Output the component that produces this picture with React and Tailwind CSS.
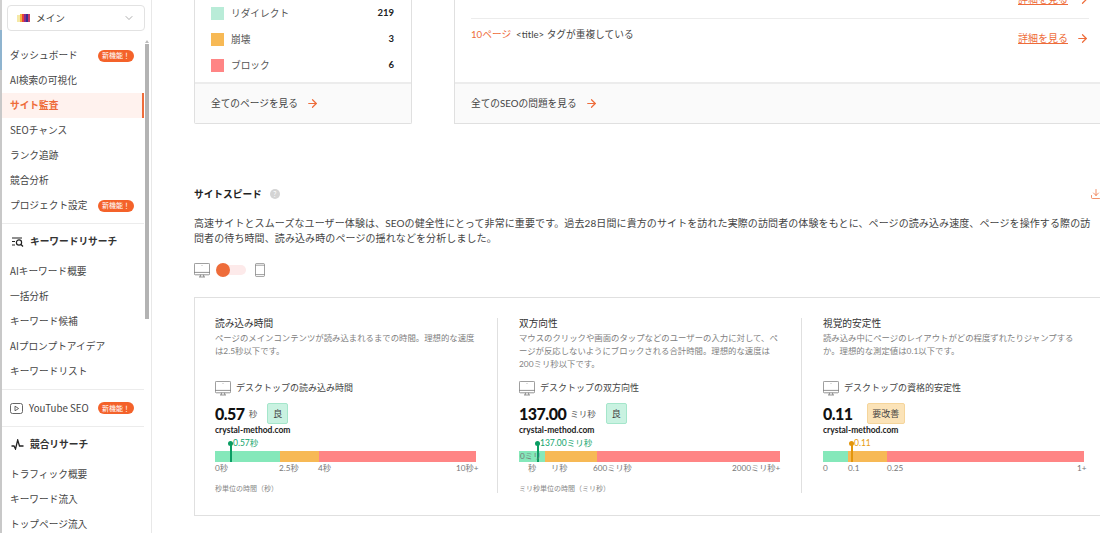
import React from "react";
import { ArrowRight, ChevronDown, Download } from "lucide-react";

const Badge = () => (
  <span className="ml-auto mr-[10px] flex h-[12px] w-[36px] items-center justify-center rounded-full bg-[#f4622a] text-[7px] leading-none text-white">新機能！</span>
);

const Row = ({ label, badge, active }) => (
  <div className={`flex h-[25px] items-center pl-[8px] text-[9.7px] ${active ? "border-r-2 border-[#ee6c3a] bg-[#fff2ee] font-bold text-[#ee6c3a]" : "text-[#444]"}`}>
    <span>{label}</span>
    {badge && <Badge />}
  </div>
);

const Divider = ({ className = "" }) => <div className={`h-px bg-[#ececec] ${className}`} />;

const SearchIcon = () => (
  <svg width="13" height="12" viewBox="0 0 13 12" fill="none" stroke="#222" strokeWidth="1.2">
    <path d="M1 2h10M1 5.5h3M1 9h3" />
    <circle cx="8" cy="6.5" r="2.6" />
    <path d="M10 8.5l2 2" />
  </svg>
);
const PlayIcon = () => (
  <svg width="13" height="11" viewBox="0 0 13 11" fill="none" stroke="#555" strokeWidth="0.9">
    <rect x="0.5" y="0.5" width="12" height="10" rx="2" />
    <path d="M5 3.2v4.6l3.6-2.3z" />
  </svg>
);
const PulseIcon = () => (
  <svg width="13" height="11" viewBox="0 0 13 11" fill="none" stroke="#222" strokeWidth="1.3">
    <path d="M0.5 7h2.5l1.5 3 2.2-9 1.8 6h4" />
  </svg>
);
const Monitor = () => (
  <svg className="shrink-0" width="16" height="15" viewBox="0 0 16 15" fill="none" stroke="#666" strokeWidth="0.7">
    <rect x="0.4" y="0.4" width="15.2" height="11.4" rx="1" />
    <path d="M0.4 9.4h15.2M5 14h6M6.5 11.8l-.4 2.2M9.5 11.8l.4 2.2M8 2.4v.6" />
  </svg>
);
const Phone = () => (
  <svg width="10" height="14" viewBox="0 0 10 14" fill="none" stroke="#777" strokeWidth="0.7">
    <rect x="0.5" y="0.4" width="9" height="13.2" rx="1.2" />
    <path d="M0.5 2.2h9M0.5 11.6h9" />
  </svg>
);
const Logo = () => (
  <svg width="13" height="9" viewBox="0 0 13 9">
    <rect x="0" y="1" width="3" height="7" fill="#f5e9a8" />
    <rect x="3" y="0" width="2" height="8" fill="#f5b23c" />
    <rect x="5" y="0" width="2" height="8" fill="#e8413c" />
    <rect x="7" y="0" width="2" height="8" fill="#8a2b8f" />
    <rect x="9" y="0" width="2" height="8" fill="#3a2f8f" />
    <rect x="11" y="0" width="2" height="8" fill="#c23a6a" />
  </svg>
);

const Legend = ({ color, label, value }) => (
  <div className="flex h-[26px] items-center">
    <span className={`h-[13px] w-[13px] ${color}`} />
    <span className="ml-[7px] text-[9.7px] text-[#555]">{label}</span>
    <span className="ml-auto text-[9.5px] font-bold text-[#222]">{value}</span>
  </div>
);

const Footer = ({ label }) => (
  <div className="flex h-[41px] shrink-0 items-center border-t-2 border-[#ececec] bg-[#fafafa] text-[9.7px] text-[#444]">
    {label}
    <ArrowRight className="ml-[8px] text-[#ee6c3a]" size={13} strokeWidth={2.2} />
  </div>
);

const Issue = ({ text }) => (
  <div className="flex h-[38px] items-center justify-between">
    <div className="-mt-[7px] text-[9.7px] text-[#444]">{text}</div>
    <div className="flex items-center text-[10px] text-[#ee6c3a]">
      <span className="underline">詳細を見る</span>
      <ArrowRight className="ml-[8px]" size={13} strokeWidth={2.2} />
    </div>
  </div>
);

const Metric = ({ title, desc, head, value, unit, badge, badgeClass, marker, markerClass, dotClass, green, orange, ticks, note }) => (
  <div className="w-[261px]">
    <div className="h-[10px] text-[9.7px] leading-[10px] text-[#333]">{title}</div>
    <div className="mt-[4px] h-[48px] text-[8.4px] leading-[13px] text-[#808080]">
      {desc.map((d) => <div key={d} className="whitespace-nowrap">{d}</div>)}
    </div>
    <div className="flex h-[16px] items-center text-[9px] text-[#444]">
      <Monitor />
      <span className="ml-[5px]">{head}</span>
    </div>
    <div className="mt-[7px] flex h-[21px] items-center">
      <span className="text-[16px] font-black leading-none tracking-[-0.5px] text-[#111]">{value}</span>
      {unit && <span className="ml-[4px] mt-[2px] text-[8.5px] text-[#555]">{unit}</span>}
      <span className={`flex h-[21px] items-center justify-center rounded-[2px] border text-[9px] text-[#444] ${unit ? "ml-[10px]" : "ml-[14px]"} ${badgeClass}`}>{badge}</span>
    </div>
    <div className="mt-[1px] h-[10px] text-[8.5px] font-bold leading-[10px] text-[#222]">crystal-method.com</div>
    <div className="relative pt-[16px]">
      <div className="flex h-[11px] w-[261px]">
        <div className="bg-[#85e8ba]" style={{ width: green }} />
        <div className="bg-[#f7b955]" style={{ width: orange }} />
        <div className="flex-1 bg-[#ff8585]" />
      </div>
      <div className={`absolute top-[8px] h-[19px] w-[1.5px] ${dotClass}`} style={{ left: marker.x }} />
      <div className={`absolute top-[6px] h-[5px] w-[5px] rounded-full ${dotClass}`} style={{ left: marker.x - 2 }} />
      <div className={`absolute top-[3px] text-[8.5px] leading-[10px] ${markerClass}`} style={{ left: marker.x + 3 }}>{marker.label}</div>
      <div className="relative h-[12px] text-[8.2px] leading-[13px] text-[#777]">
        {ticks.map((t) => (
          <span key={t.label} className="absolute whitespace-nowrap" style={{ left: t.x, top: t.y || 0 }}>{t.label}</span>
        ))}
      </div>
    </div>
    <div className="mt-[9px] h-[10px] text-[7px] leading-[10px] text-[#888]">{note}</div>
  </div>
);

export default function App() {
  return (
    <div className="flex h-[533px] w-[1100px] overflow-hidden bg-white font-['Noto_Sans_CJK_JP',sans-serif]">
      <aside className="flex w-[152px] shrink-0 border-r border-[#e8e8e8]">
        <div className="w-[2px] shrink-0 bg-[linear-gradient(to_bottom,#d0d0d0_0,#d0d0d0_30px,#8fb4cf_30px,#8fb4cf_70px,#c8c8c8_70px)]" />
        <div className="w-[142px] shrink-0">
          <div className="mb-[12px] ml-[5px] mt-[5px] flex h-[26px] w-[138px] items-center rounded-[4px] border border-[#e2e2e2] pl-[9px] pr-[9px] text-[9.7px] text-[#444]">
            <Logo />
            <span className="ml-[6px]">メイン</span>
            <ChevronDown className="ml-auto text-[#777]" size={12} strokeWidth={1.2} />
          </div>
          <Row label="ダッシュボード" badge />
          <Row label="AI検索の可視化" />
          <Row label="サイト監査" active />
          <Row label="SEOチャンス" />
          <Row label="ランク追跡" />
          <Row label="競合分析" />
          <Row label="プロジェクト設定" badge />
          <Divider className="mt-[5px]" />
          <div className="flex h-[35px] items-center pl-[9px] text-[9.7px] font-bold text-[#333]">
            <SearchIcon />
            <span className="ml-[6px]">キーワードリサーチ</span>
          </div>
          <Row label="AIキーワード概要" />
          <Row label="一括分析" />
          <Row label="キーワード候補" />
          <Row label="AIプロンプトアイデア" />
          <Row label="キーワードリスト" />
          <Divider className="mt-[5px]" />
          <div className="flex h-[36px] items-center pl-[8px] text-[9.7px] text-[#444]">
            <PlayIcon />
            <span className="ml-[6px]">YouTube SEO</span>
            <Badge />
          </div>
          <Divider />
          <div className="flex h-[35px] items-center pl-[9px] text-[9.7px] font-bold text-[#333]">
            <PulseIcon />
            <span className="ml-[6px]">競合リサーチ</span>
          </div>
          <Row label="トラフィック概要" />
          <Row label="キーワード流入" />
          <Row label="トップページ流入" />
        </div>
        <div className="ml-[1px] w-[4px] shrink-0 pt-[40px]">
          <div className="mx-auto mb-[1px] h-0 w-0 border-x-[2px] border-b-[3px] border-x-transparent border-b-[#bbb]" />
          <div className="h-[275px] w-[4px] bg-[#b3b3b3]" />
        </div>
      </aside>

      <main className="min-w-0 flex-1 pl-[42px] font-['Lato','Noto_Sans_CJK_JP',sans-serif]">
        <div className="-mt-[20px] flex">
          <section className="flex h-[144px] w-[218px] shrink-0 flex-col rounded-b-[2px] border border-t-0 border-[#e0e0e0]">
            <div className="mt-[20px] pl-[16px] pr-[17px]">
              <Legend color="bg-[#b9ecd8]" label="リダイレクト" value="219" />
              <Legend color="bg-[#f7b955]" label="崩壊" value="3" />
              <Legend color="bg-[#ff8585]" label="ブロック" value="6" />
            </div>
            <div className="mt-auto [&>div]:pl-[16px]">
              <Footer label="全てのページを見る" />
            </div>
          </section>
          <section className="ml-[42px] flex h-[144px] w-[700px] shrink-0 flex-col border border-t-0 border-[#e0e0e0]">
            <div className="ml-[16px] w-[618px]">
              <div className="border-b border-[#ececec]">
                <Issue text={<><span className="text-[#ee6c3a]">8ページ</span><span className="ml-[5px]">メタディスクリプションが重複している</span></>} />
              </div>
              <Issue text={<><span className="text-[#ee6c3a]">10ページ</span><span className="ml-[5px]">&lt;title&gt; タグが重複している</span></>} />
            </div>
            <div className="mt-auto [&>div]:px-[16px]">
              <Footer label="全てのSEOの問題を見る" />
            </div>
          </section>
        </div>

        <div className="mt-[63px] flex h-[14px] w-[908px] items-center">
          <span className="text-[9.7px] font-bold text-[#222]">サイトスピード</span>
          <span className="ml-[8px] flex h-[10px] w-[10px] items-center justify-center rounded-full bg-[#d4d4d4] text-[7px] text-white">?</span>
          <Download className="ml-auto text-[#ee6c3a]" size={12} strokeWidth={1.5} />
        </div>
        <p className="mt-[15px] w-[912px] whitespace-nowrap text-[10px] leading-[15px] tracking-[0.1px] text-[#444]">
          高速サイトとスムーズなユーザー体験は、SEOの健全性にとって非常に重要です。過去28日間に貴方のサイトを訪れた実際の訪問者の体験をもとに、ページの読み込み速度、ページを操作する際の訪
          <br />
          問者の待ち時間、読み込み時のページの揺れなどを分析しました。
        </p>
        <div className="mt-[16px] flex h-[16px] items-center">
          <Monitor />
          <div className="relative ml-[6px] h-[16px] w-[30px]">
            <div className="absolute left-[2px] top-[3px] h-[10px] w-[28px] rounded-full bg-[#fdeaea]" />
            <div className="absolute left-0 top-[1px] h-[14px] w-[14px] rounded-full bg-[#ee6c3a]" />
          </div>
          <span className="ml-[9px]"><Phone /></span>
        </div>

        <section className="mt-[19px] flex h-[219px] w-[912px] border border-r-0 border-[#e0e0e0] pl-[20px] pt-[20px]">
          <div className="w-[304px] shrink-0">
            <div className="h-[175px] w-[283px] border-r border-[#e0e0e0]">
              <Metric
                title="読み込み時間"
                desc={["ページのメインコンテンツが読み込まれるまでの時間。理想的な速度", "は2.5秒以下です。"]}
                head="デスクトップの読み込み時間"
                value="0.57"
                unit="秒"
                badge="良"
                badgeClass="w-[21px] border-[#a5e6cb] bg-[#c9f2e1]"
                marker={{ x: 15, label: "0.57秒" }}
                markerClass="text-[#10a36b]"
                dotClass="bg-[#0a9d63]"
                green={65}
                orange={39}
                ticks={[{ x: 0, label: "0秒" }, { x: 64, label: "2.5秒" }, { x: 103, label: "4秒" }, { x: 241, label: "10秒+" }]}
                note="秒単位の時間（秒）"
              />
            </div>
          </div>
          <div className="w-[304px] shrink-0">
            <div className="h-[175px] w-[283px] border-r border-[#e0e0e0]">
              <Metric
                title="双方向性"
                desc={["マウスのクリックや画面のタップなどのユーザーの入力に対して、ペ", "ージが反応しないようにブロックされる合計時間。理想的な速度は", "200ミリ秒以下です。"]}
                head="デスクトップの双方向性"
                value="137.00"
                unit="ミリ秒"
                badge="良"
                badgeClass="w-[21px] border-[#a5e6cb] bg-[#c9f2e1]"
                marker={{ x: 18, label: "137.00ミリ秒" }}
                markerClass="text-[#10a36b]"
                dotClass="bg-[#0a9d63]"
                green={26}
                orange={52}
                ticks={[{ x: 1, y: -12, label: "0ミリ" }, { x: 9, label: "秒" }, { x: 32, label: "リ秒" }, { x: 74, label: "600ミリ秒" }, { x: 213, label: "2000ミリ秒+" }]}
                note="ミリ秒単位の時間（ミリ秒）"
              />
            </div>
          </div>
          <div className="w-[304px] shrink-0">
            <Metric
              title="視覚的安定性"
              desc={["読み込み中にページのレイアウトがどの程度ずれたりジャンプする", "か。理想的な測定値は0.1以下です。"]}
              head="デスクトップの資格的安定性"
              value="0.11"
              badge="要改善"
              badgeClass="w-[38px] border-[#f5d59b] bg-[#fbe3b8]"
              marker={{ x: 28, label: "0.11" }}
              markerClass="text-[#e89c10]"
              dotClass="bg-[#e3960c]"
              green={25}
              orange={39}
              ticks={[{ x: 0, label: "0" }, { x: 25, label: "0.1" }, { x: 64, label: "0.25" }, { x: 254, label: "1+" }]}
            />
          </div>
        </section>
      </main>
    </div>
  );
}
